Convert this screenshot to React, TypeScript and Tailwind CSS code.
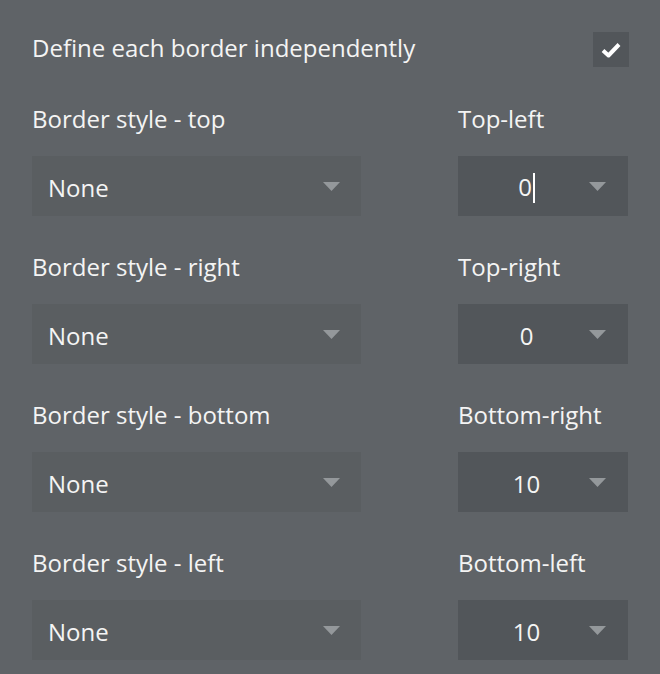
import React from "react";

const rows = [
  { left: "Border style - top", right: "Top-left", value: "0", caret: true },
  { left: "Border style - right", right: "Top-right", value: "0" },
  { left: "Border style - bottom", right: "Bottom-right", value: "10" },
  { left: "Border style - left", right: "Bottom-left", value: "10" },
];

const Arrow = () => (
  <svg width="17" height="9" viewBox="0 0 17 9" className="shrink-0">
    <path d="M0 0 H17 L8.5 9 Z" fill="#94989b" />
  </svg>
);

const App = () => {
  return (
    <div className="w-[660px] h-[674px] bg-[#5f6367] text-[#f4f4f4] text-[24px] leading-[30px] font-['Open_Sans',sans-serif] pt-8 px-8 overflow-hidden">
      <div className="flex items-center justify-between h-[35px]">
        <span className="-mt-[3px]">Define each border independently</span>
        <div className="w-[36px] h-[35px] bg-[#52565a] flex items-center justify-center mr-[-1px]">
          <svg width="20" height="16" viewBox="0 0 20 16">
            <path d="M2 8.5 L7.5 13.5 L18 2.5" stroke="#ffffff" strokeWidth="4" fill="none" strokeLinejoin="round" />
          </svg>
        </div>
      </div>
      <div className="mt-[37px] flex flex-col">
        {rows.map((r) => (
          <div key={r.left} className="grid grid-cols-[329px_170px] gap-x-[97px] mb-[36px]">
            <div className="flex flex-col">
              <span className="h-[30px] mb-[22px]">{r.left}</span>
              <div className="h-[60px] bg-[#5a5e61] flex items-center pl-4 pr-[21px] justify-between">
                <span className="mt-[3px]">None</span>
                <Arrow />
              </div>
            </div>
            <div className="flex flex-col">
              <span className="h-[30px] mb-[22px]">{r.right}</span>
              <div className="h-[60px] bg-[#52565a] flex items-center pl-[6px] pr-[22px]">
                <span className="flex-1 text-center mt-[3px]">
                  {r.value}
                  {r.caret && <span className="inline-block w-[2px] h-[30px] bg-white align-middle ml-[1px] -mt-[2px]" />}
                </span>
                <Arrow />
              </div>
            </div>
          </div>
        ))}
      </div>
    </div>
  );
};

export default App;
